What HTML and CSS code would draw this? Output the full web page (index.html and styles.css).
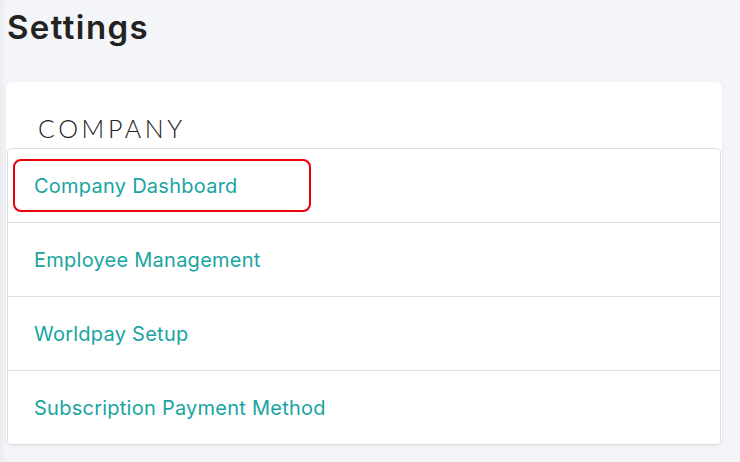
FILE: index.html
```html
<!DOCTYPE html>
<html lang="en">
<head>
    <meta charset="UTF-8">
    <meta name="viewport" content="width=device-width, initial-scale=1.0">
    <title>Settings</title>
    <link rel="stylesheet" href="styles.css">
</head>
<body>

    <h1 class="page-title">Settings</h1>

    <!-- Company settings card -->
    <div class="settings-card">
        <h3 class="card-heading">COMPANY</h3>
        <ul class="settings-list">
            <li class="settings-item selected"><a href="#">Company Dashboard</a></li>
            <li class="settings-item"><a href="#">Employee Management</a></li>
            <li class="settings-item"><a href="#">Worldpay Setup</a></li>
            <li class="settings-item"><a href="#">Subscription Payment Method</a></li>
        </ul>
    </div>

</body>
</html>
```

FILE: styles.css
```css
body {
    font-family: Inter, 'Noto Sans', sans-serif;
    background: #f4f5f9;
    margin: 0;
    padding: 0 18px 0 6px;
    box-shadow: inset 6px 0 6px -4px rgba(0, 0, 0, 0.05);
    min-height: 462px;
    box-sizing: border-box;
}
.page-title {
    margin: 0;
    padding: 7px 0 0 1px;
    height: 82px;
    box-sizing: border-box;
    font-size: 33px;
    font-weight: 600;
    color: #222;
    letter-spacing: 1.4px;
}
.settings-card {
    background: white;
    border-radius: 6px;
    box-shadow: 0 1px 4px rgba(0, 0, 0, 0.06);
    padding: 0 1px;
}
.card-heading {
    margin: 0;
    padding: 31px 0 0 31px;
    height: 66px;
    box-sizing: border-box;
    font-family: Lato, sans-serif;
    font-size: 25px;
    font-weight: 300;
    letter-spacing: 3.6px;
    color: #222;
}
.settings-list {
    list-style: none;
    margin: 0;
    padding: 0;
    border: 1px solid #dedede;
    border-radius: 4px;
}
.settings-item {
    position: relative;
    padding: 25px 26px 24px;
    font-size: 20px;
    line-height: 24px;
    border-bottom: 1px solid #dedede;
}
.settings-item:last-child {
    border-bottom: none;
}
.settings-item a {
    color: #19a4a2;
    text-decoration: none;
    letter-spacing: 0.25px;
}
/* red highlight round the chosen item */
.settings-item.selected::after {
    content: "";
    position: absolute;
    left: 5px;
    top: 10px;
    width: 294px;
    height: 49px;
    border: 2px solid #e8000b;
    border-radius: 8px;
}
```
